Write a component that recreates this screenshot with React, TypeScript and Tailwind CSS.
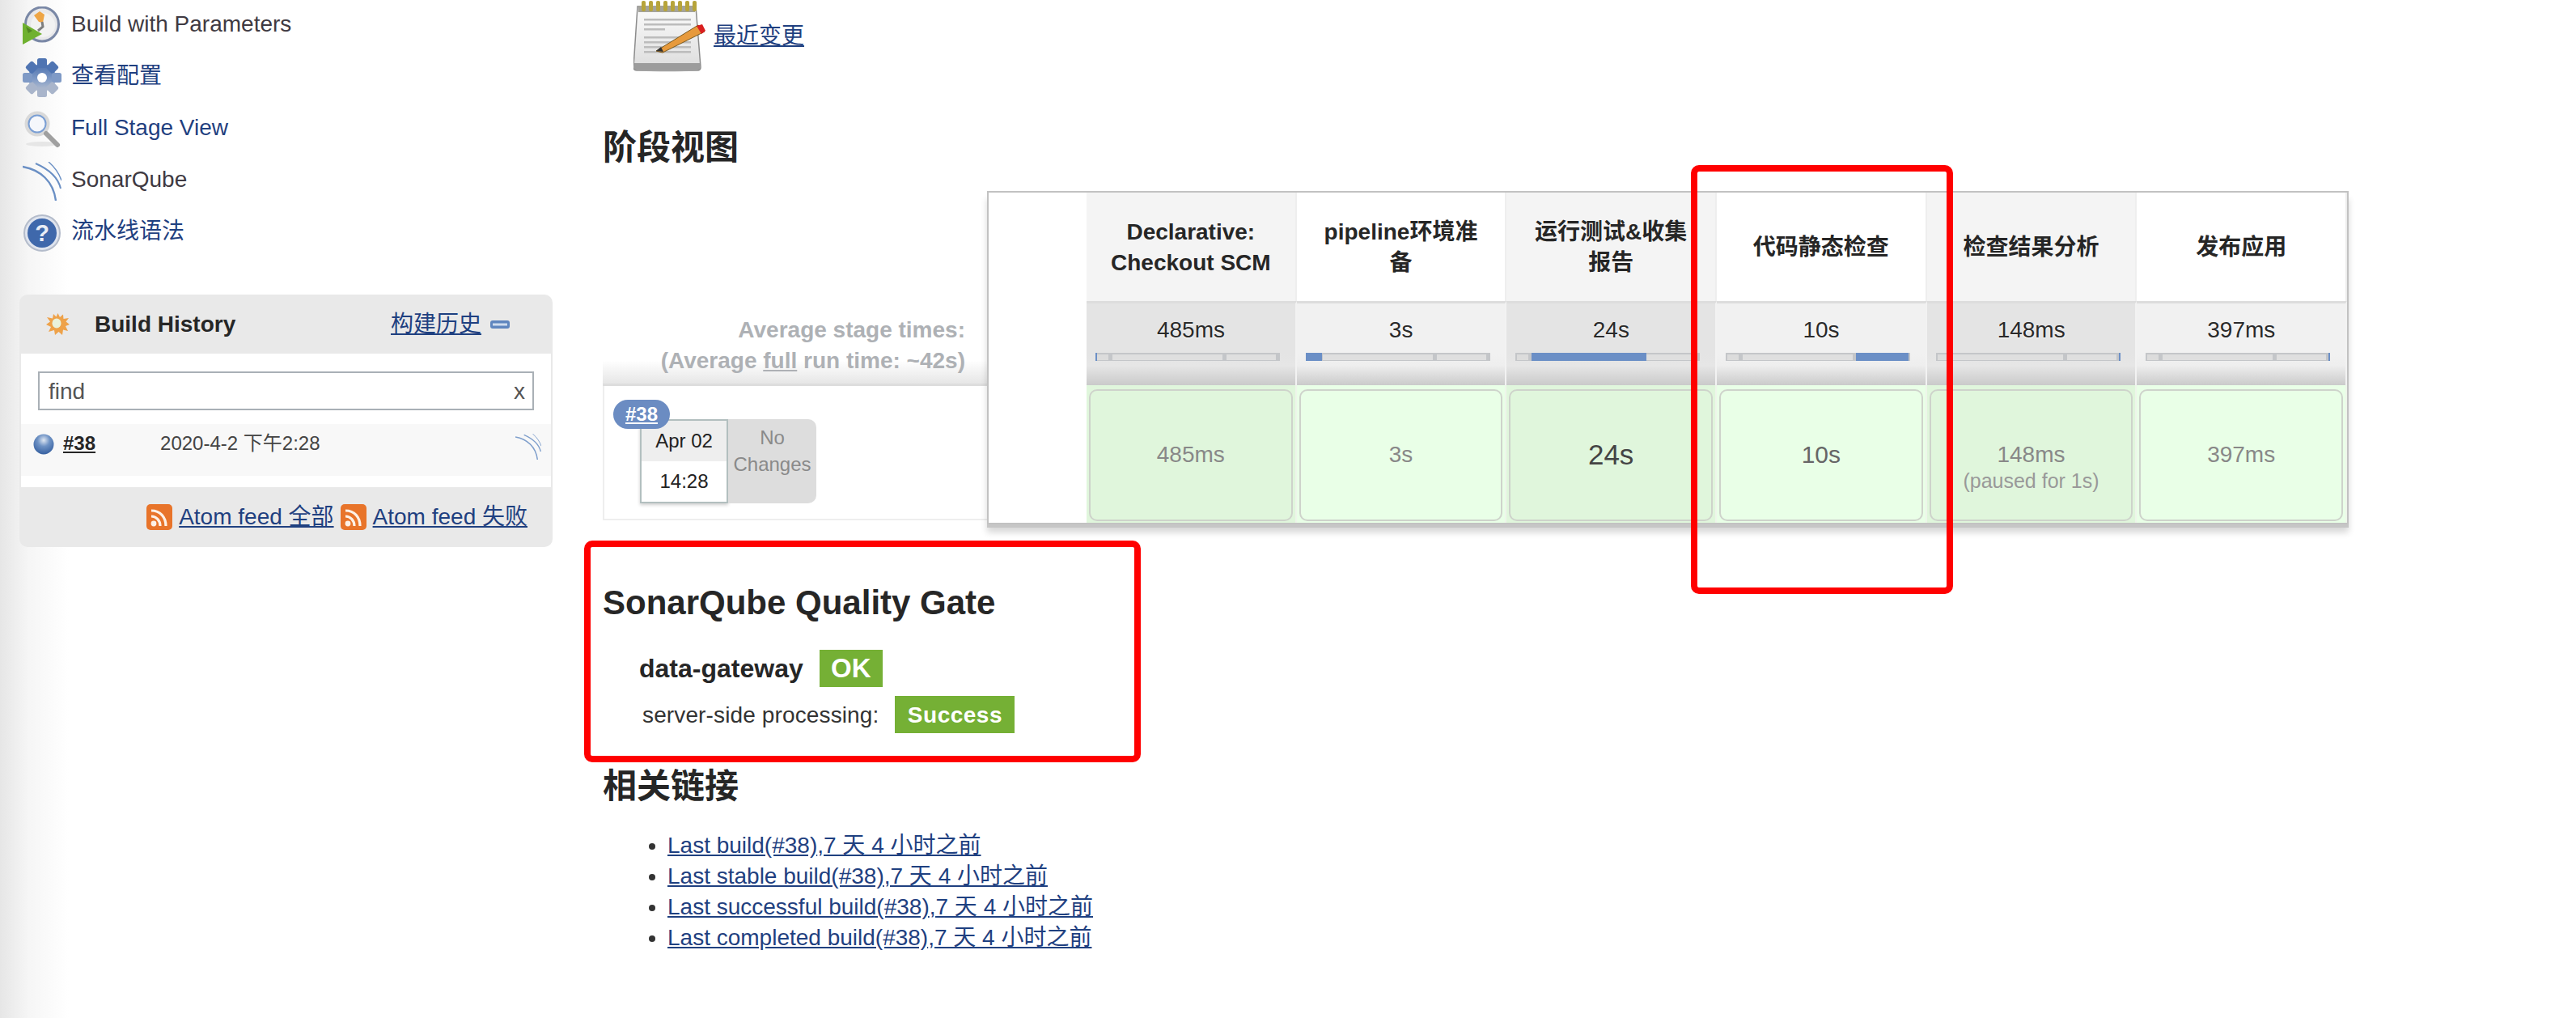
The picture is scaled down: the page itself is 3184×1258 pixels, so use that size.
import React from "react";

const linkCls = "text-[#1f4080] underline";

function ClockIcon() {
  return (
    <svg width="48" height="48" viewBox="0 0 48 48">
      <ellipse cx="24" cy="22" rx="20.5" ry="21" fill="#e8e8ea" stroke="#7a88a6" strokeWidth="3" />
      <ellipse cx="25" cy="23" rx="15" ry="15" fill="#f2f2f2" />
      <path d="M14 11 L21 6 L27 10 L25 20 L20 19 Z" fill="#eea545" />
      <path d="M24 19 L25 25 L19 30" stroke="#7e7e7e" strokeWidth="3" fill="none" />
      <path d="M0 20 L24 34 L0 47 Z" fill="#6fb12f" />
      <path d="M4 25 L12 30 L7 33 Z" fill="#3d6a1a" opacity="0.6" />
    </svg>
  );
}

function GearIcon() {
  const teeth = [0, 45, 90, 135, 180, 225, 270, 315];
  return (
    <svg width="48" height="48" viewBox="0 0 48 48">
      <defs>
        <linearGradient id="gearFill" x1="0" y1="0" x2="0" y2="1">
          <stop offset="0" stopColor="#4a6fae" />
          <stop offset="0.55" stopColor="#7f9ac6" />
          <stop offset="1" stopColor="#b9c1cf" />
        </linearGradient>
      </defs>
      <g fill="url(#gearFill)">
        <circle cx="24" cy="24" r="17" />
      </g>
      {teeth.map((a) => (
        <rect key={a} x="18" y="0" width="12" height="12" rx="2.5" fill={a === 0 || a === 45 || a === 315 ? "#4f74b2" : a === 90 || a === 270 ? "#7f9ac6" : "#a9b5cb"} transform={`rotate(${a} 24 24)`} />
      ))}
      <circle cx="24" cy="24" r="6" fill="#ffffff" />
    </svg>
  );
}

function SearchIcon() {
  return (
    <svg width="48" height="48" viewBox="0 0 48 48">
      <ellipse cx="24" cy="42" rx="20" ry="3" fill="#e6e6e6" />
      <circle cx="18" cy="17" r="15.5" fill="#d9d9d9" />
      <circle cx="18" cy="17" r="10.5" fill="#f5f7fb" stroke="#7b9fd4" strokeWidth="2" />
      <path d="M29 29 L43 43" stroke="#a0a0a0" strokeWidth="6" strokeLinecap="round" />
    </svg>
  );
}

function SonarIcon({ size = 48, color = "#6a8fc4" }: { size?: number; color?: string }) {
  return (
    <svg width={size} height={size} viewBox="0 0 48 48" fill="none" stroke={color}>
      <path d="M0 6 C 22 10 38 24 41 48" strokeWidth="2.4" />
      <path d="M16 2 C 32 9 44 20 47 33" strokeWidth="2" />
      <path d="M32 0 C 40 7 45 14 48 23" strokeWidth="1.4" />
    </svg>
  );
}

function HelpIcon() {
  return (
    <svg width="48" height="48" viewBox="0 0 48 48">
      <circle cx="24" cy="24" r="22" fill="#dfe4ee" stroke="#b4bccb" strokeWidth="2" />
      <circle cx="24" cy="24" r="18" fill="#3f68ab" />
      <text x="24" y="34" textAnchor="middle" fontSize="29" fontWeight="700" fill="#e9edf5" fontFamily="Liberation Sans">?</text>
    </svg>
  );
}

function SunIcon() {
  return (
    <svg width="29" height="27" viewBox="0 0 29 27">
      <polygon
        points="14.5,0 17,5 21,1.5 21.5,7 28,6 24.5,10.5 29,14 24,16 27,22 21,20.5 20,27 15.5,23 11,27 10,21 3,23 6,17 0,14 5,10.5 1,5 8,6.5 9,1 12.5,4.5"
        fill="#eea24a"
      />
      <ellipse cx="13" cy="12.5" rx="5.5" ry="6" fill="#e9f2dc" />
    </svg>
  );
}

function BallIcon() {
  return (
    <svg width="26" height="27" viewBox="0 0 26 27">
      <defs>
        <radialGradient id="ball" cx="0.5" cy="0.3" r="0.75">
          <stop offset="0" stopColor="#dfe7f2" />
          <stop offset="0.4" stopColor="#6f93c5" />
          <stop offset="1" stopColor="#2f5a9c" />
        </radialGradient>
      </defs>
      <circle cx="13" cy="13" r="12.5" fill="url(#ball)" />
    </svg>
  );
}

function MinusIcon() {
  return (
    <svg width="24" height="10" viewBox="0 0 24 10">
      <rect x="0" y="0" width="24" height="10" rx="3" fill="#5f86bf" />
      <rect x="3" y="3.5" width="18" height="3" fill="#cfdcee" />
    </svg>
  );
}

function RssIcon() {
  return (
    <svg width="32" height="32" viewBox="0 0 32 32">
      <rect width="32" height="32" rx="5" fill="#e8742a" />
      <circle cx="9" cy="24" r="3.4" fill="#fdf1e6" />
      <path d="M6 15 C 12 15 17 20 17 27" stroke="#fdf1e6" strokeWidth="3.2" fill="none" />
      <path d="M6 8 C 17 8 24 16 24 27" stroke="#fdf1e6" strokeWidth="3.2" fill="none" />
    </svg>
  );
}

function NotepadIcon() {
  const rings = [0, 1, 2, 3, 4, 5, 6, 7];
  const lines = [22, 28, 34, 44, 50, 56, 62];
  return (
    <svg width="90" height="88" viewBox="0 0 90 88">
      <defs>
        <linearGradient id="pad" x1="0" y1="0" x2="0" y2="1">
          <stop offset="0" stopColor="#fbfbfb" />
          <stop offset="1" stopColor="#dcdcdc" />
        </linearGradient>
      </defs>
      <ellipse cx="42" cy="85" rx="38" ry="3" fill="#e3e3e3" />
      <path d="M5 7 L77 7 L83 82 Q83 86 79 86 L4 86 Q0 86 0 82 Z" fill="url(#pad)" stroke="#8c8c8c" strokeWidth="1.5" />
      <rect x="1" y="77" width="81" height="8" fill="#9c9c9c" />
      <rect x="6" y="6" width="70" height="8" fill="#a4a39c" />
      {rings.map((i) => (
        <rect key={i} x={10 + i * 9} y="0" width="5" height="13" rx="2" fill="#b7a43a" />
      ))}
      {lines.map((y, i) => (
        <rect key={y} x="13" y={y} width={i === 2 ? 26 : 58} height="2.5" fill="#bcbcbc" />
      ))}
      <path d="M28 62 L80 30 L88 38 L36 64 Z" fill="#e79a3c" stroke="#7a5a20" strokeWidth="1" />
      <path d="M28 62 L34 57 L37 63 Z" fill="#333" />
      <path d="M78 31 L85 29 L89 37 L84 41 Z" fill="#d91f1f" />
    </svg>
  );
}

const tasks: { label: string; icon: React.ReactNode; link: boolean }[] = [
  { label: "Build with Parameters", icon: <ClockIcon />, link: false },
  { label: "查看配置", icon: <GearIcon />, link: true },
  { label: "Full Stage View", icon: <SearchIcon />, link: true },
  { label: "SonarQube", icon: <SonarIcon />, link: false },
  { label: "流水线语法", icon: <HelpIcon />, link: true },
];

type Stage = {
  name: string;
  avg: string;
  left: number;
  width: number;
  time: string;
  note?: string;
  textCls: string;
};

const stages: Stage[] = [
  { name: "Declarative: Checkout SCM", avg: "485ms", left: 0, width: 2, time: "485ms", textCls: "text-[28px] text-[#888888]" },
  { name: "pipeline环境准备", avg: "3s", left: 0, width: 20, time: "3s", textCls: "text-[28px] text-[#888888]" },
  { name: "运行测试&收集报告", avg: "24s", left: 20, width: 142, time: "24s", textCls: "text-[35px] text-[#444444]" },
  { name: "代码静态检查", avg: "10s", left: 161, width: 65, time: "10s", textCls: "text-[30px] text-[#666666]" },
  { name: "检查结果分析", avg: "148ms", left: 226, width: 2, time: "148ms", note: "(paused for 1s)", textCls: "text-[28px] text-[#888888]" },
  { name: "发布应用", avg: "397ms", left: 226, width: 2, time: "397ms", textCls: "text-[28px] text-[#888888]" },
];

const links = ["Last build(#38)", "Last stable build(#38)", "Last successful build(#38)", "Last completed build(#38)"];

function Bar({ left, width }: { left: number; width: number }) {
  return (
    <div className="relative h-[10px] w-[228px] bg-[#c4c6c9]">
      <div className="flex h-full gap-[5px] pb-[1px] pl-[2px] pr-[5px] pt-[2px]">
        <div className="w-[14px] bg-[#dcdcdc]" />
        <div className="w-[136px] bg-[#dfdfdf]" />
        <div className="flex-1 bg-[#dfdfdf]" />
      </div>
      <div className="absolute top-0 h-full bg-[#6b8fc6]" style={{ left, width }} />
    </div>
  );
}

export default function App() {
  return (
    <div className="flex h-[1258px] w-[3184px] overflow-hidden bg-white font-['Liberation_Sans','Noto_Sans_CJK_SC',sans-serif] text-[28px] text-[#333333]">
      {/* Sidebar */}
      <aside className="w-[745px] shrink-0 bg-[linear-gradient(to_right,#e6e6e6,#f6f6f6_36px,#ffffff_85px)] pl-[24px] pr-[62px]">
        <ul>
          {tasks.map((t) => (
            <li key={t.label} className="flex h-[64px] items-center pl-[4px]">
              <span className="flex h-[48px] w-[48px] shrink-0">{t.icon}</span>
              <span className={`mb-[4px] ml-[12px] leading-[34px] ${t.link ? "text-[#1f4080]" : "text-[#3f3a42]"}`}>{t.label}</span>
            </li>
          ))}
        </ul>

        <section className="mt-[44px] h-[312px] overflow-hidden rounded-[10px] bg-[#e9e9e9]">
          <div className="flex h-[73px] items-center pl-[33px] pr-[53px]">
            <SunIcon />
            <h3 className="ml-[31px] font-bold leading-[34px] text-[#262626]">Build History</h3>
            <a className={`ml-auto leading-[34px] ${linkCls}`}>构建历史</a>
            <span className="ml-[11px] flex"><MinusIcon /></span>
          </div>
          <div className="mx-[2px] h-[165px] bg-white pt-[22px]">
            <div className="mx-[21px] flex h-[48px] items-center justify-between border-2 border-[#a9b0b6] pl-[11px] pr-[9px] pt-[2px] text-[#555555]">
              <span>find</span>
              <span>x</span>
            </div>
            <div className="mt-[17px] flex h-[64px] bg-[#f8f8f8] pl-[15px] pr-[12px] pt-[12px] text-[24px]">
              <BallIcon />
              <a className="ml-[11px] font-bold leading-[24px] text-[#262626] underline">#38</a>
              <span className="ml-[80px] leading-[24px] text-[#444444]">2020-4-2 下午2:28</span>
              <span className="ml-auto flex"><SonarIcon size={32} color="#7f9fcc" /></span>
            </div>
          </div>
          <div className="flex h-[74px] items-center justify-end pr-[31px]">
            <RssIcon />
            <a className={`ml-[8px] leading-[34px] ${linkCls}`}>Atom feed 全部</a>
            <span className="ml-[8px] flex"><RssIcon /></span>
            <a className={`ml-[8px] leading-[34px] ${linkCls}`}>Atom feed 失败</a>
          </div>
        </section>
      </aside>

      {/* Main */}
      <main className="flex-1">
        <div className="flex h-[88px] items-center pl-[38px] pt-[2px]">
          <NotepadIcon />
          <a className={`ml-[9px] leading-[34px] ${linkCls}`}>最近变更</a>
        </div>

        <h2 className="mt-[72px] text-[42px] font-bold leading-[46px] text-[#262626]">阶段视图</h2>

        {/* Stage view */}
        <div className="mt-[30px] flex">
          <div className="w-[475px] shrink-0">
            <div className="h-[241px] border-b-[3px] border-[#dddddd] bg-[linear-gradient(to_bottom,#ffffff_88%,#e6e6e6)] pr-[27px] pt-[153px] text-right font-bold leading-[38px] text-[#aeb1b5]">
              <p>Average stage times:</p>
              <p>(Average <span className="underline">full</span> run time: ~42s)</p>
            </div>
            <div className="h-[166px] border-b-2 border-l-2 border-[#eeeeee] pl-[44px] pt-[41px]">
              <div className="relative flex h-[104px] w-[218px]">
                <a className="absolute left-[-33px] top-[-24px] z-10 flex h-[36px] w-[70px] items-center justify-center rounded-full bg-[#6b8cc2] text-[24px] font-bold text-white underline">#38</a>
                <div className="h-full w-[109px] border-2 border-[#b2bfbf] text-[24px] text-[#222222] shadow-[0_2px_4px_rgba(0,0,0,0.2)]">
                  <div className="flex h-[50px] items-center justify-center bg-[#eeeeee]">Apr 02</div>
                  <div className="flex h-[50px] items-center justify-center">14:28</div>
                </div>
                <div className="flex h-full w-[109px] flex-col items-center rounded-r-[10px] bg-[#dddddd] pt-[6px] text-[24px] leading-[33px] text-[#8a8a8a]">
                  <span>No</span>
                  <span>Changes</span>
                </div>
              </div>
            </div>
          </div>

          <div className="flex h-[412px] w-[1683px] shrink-0 border-2 border-[#c2c2c2] bg-white shadow-[0_4px_0_#c6c6c6,0_10px_8px_rgba(0,0,0,0.16)]">
            <div className="w-[121px] shrink-0" />
            <div className="grid flex-1 grid-cols-6 grid-rows-[134px_104px_170px]">
              {stages.map((s, i) => (
                <div key={s.name} className={`flex items-center justify-center border-r-2 border-[#eeeeee] px-[28px] text-center font-bold leading-[38px] text-[#262626] ${i % 2 === 0 ? "bg-[#f4f4f4]" : "bg-white"}`}>
                  <span className="pt-[2px]">{s.name}</span>
                </div>
              ))}
              {stages.map((s, i) => (
                <div key={s.name} className={`border-r-2 border-t-[3px] border-t-[#dddddd] border-r-[#f2f2f2] pl-[11px] pt-[14px] ${i % 2 === 0 ? "bg-[linear-gradient(to_bottom,#e4e4e4_62%,#e6e6e6_76%,#cacaca)]" : "bg-[linear-gradient(to_bottom,#f1f1f1_62%,#eeeeee_76%,#cacaca)]"}`}>
                  <div className="w-[236px] text-center leading-[38px] text-[#2a2a2a] [text-shadow:0_1px_2px_#ffffff]">{s.avg}</div>
                  <div className="mt-[9px]"><Bar left={s.left} width={s.width} /></div>
                </div>
              ))}
              {stages.map((s, i) => (
                <div key={s.name} className={`border-r-2 border-[#eef5ea] pb-[2px] pl-[3px] pr-[3px] pt-[5px] ${i % 2 === 0 ? "bg-[#e0f6dc]" : "bg-[#e9ffe7]"}`}>
                  <div className={`flex h-full flex-col items-center justify-center rounded-[10px] border-2 border-[#ced3cb] pb-[2px] ${s.textCls}`}>
                    <span className={s.note ? "mt-[33px] leading-[33px]" : "leading-[40px]"}>{s.time}</span>
                    {s.note && <span className="text-[25px] leading-[33px] text-[#999999]">{s.note}</span>}
                  </div>
                </div>
              ))}
            </div>
          </div>
        </div>

        {/* SonarQube */}
        <h2 className="mt-[73px] text-[42px] font-bold leading-[48px] text-[#262626]">SonarQube Quality Gate</h2>
        <div className="mt-[34px] flex items-center pl-[45px]">
          <span className="text-[32px] font-bold leading-[46px] text-[#262626]">data-gateway</span>
          <span className="ml-[20px] flex h-[46px] w-[78px] items-center justify-center bg-[#75b035] text-[33px] font-bold text-white">OK</span>
        </div>
        <div className="mt-[10px] flex items-center pl-[49px]">
          <span className="pt-[2px] leading-[46px] tracking-[0.13px] text-[#333333]">server-side processing:</span>
          <span className="ml-[20px] flex h-[46px] w-[148px] items-center justify-center bg-[#75b035] pt-[2px] font-bold tracking-[0.5px] text-white">Success</span>
        </div>

        {/* Links */}
        <h2 className="mt-[41px] text-[42px] font-bold leading-[48px] text-[#262626]">相关链接</h2>
        <ul className="mt-[30px] list-disc pl-[80px] marker:text-[#333333]">
          {links.map((l) => (
            <li key={l} className="h-[38px] leading-[38px]">
              <a className={linkCls}>{l},7 天 4 小时之前</a>
            </li>
          ))}
        </ul>
      </main>

      {/* Annotation overlays */}
      <div className="absolute left-[2090px] top-[204px] h-[530px] w-[324px] rounded-[10px] border-[8px] border-[#ff0000]" />
      <div className="absolute left-[722px] top-[668px] h-[274px] w-[688px] rounded-[10px] border-[8px] border-[#ff0000]" />
    </div>
  );
}
